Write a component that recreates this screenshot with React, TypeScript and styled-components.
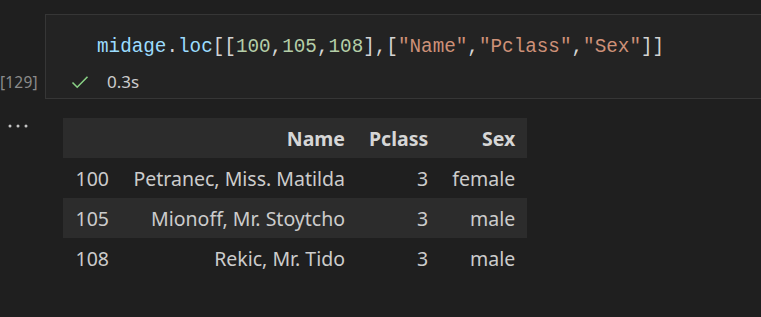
import styled, { createGlobalStyle } from "styled-components";

const GlobalStyle = createGlobalStyle`
    html, body {
        margin: 0;
        padding: 0;
        background: #1f1f1f;
        overflow: hidden;
    }
`;

const Page = styled.div`
    width: 761px;
    height: 317px;
    padding-top: 14px;
    box-sizing: border-box;
    background: #1f1f1f;
    font-family: "Noto Sans", "Open Sans", sans-serif;
`;

const CellRow = styled.div`
    display: flex;
    align-items: flex-end;
`;

const Gutter = styled.div`
    width: 45px;
    flex: none;
    height: 85px;
    display: flex;
    align-items: center;
    padding-top: 51px;
    box-sizing: border-box;
    font-family: "Noto Sans", sans-serif;
    font-size: 15.5px;
    color: #8b8b8b;
    letter-spacing: 0.2px;
`;

const CellBox = styled.div`
    flex: 1;
    height: 85px;
    box-sizing: border-box;
    background: #232323;
    border: 1px solid #363636;
    border-right: none;
    margin-right: -2px;
    display: flex;
    flex-direction: column;
`;

const CodeLine = styled.div`
    height: 44px;
    padding: 20px 0 0 51px;
    box-sizing: border-box;
    font-family: "Liberation Mono", "DejaVu Sans Mono", monospace;
    font-size: 19.3px;
    line-height: 24px;
    white-space: pre;
    color: #d4d4d4;
`;

const Tok = styled.span<{ $kind: "var" | "num" | "str" | "punc" }>`
    color: ${(p) =>
        p.$kind === "var"
            ? "#9cdcfe"
            : p.$kind === "num"
            ? "#b5cea8"
            : p.$kind === "str"
            ? "#ce9178"
            : "#d4d4d4"};
`;

const Status = styled.div`
    display: flex;
    align-items: center;
    gap: 18px;
    padding: 11px 0 0 25px;
    font-size: 17px;
    color: #cccccc;
`;

const Output = styled.div`
    display: flex;
    align-items: flex-start;
    padding-top: 19px;
`;

const MoreButton = styled.div`
    width: 63px;
    flex: none;
    padding: 6px 0 0 8px;
    box-sizing: border-box;
    display: flex;
`;

const Table = styled.table`
    border-collapse: collapse;
    font-family: "Noto Sans", "Open Sans", sans-serif;
    font-size: 19.5px;
    color: #cccccc;
    table-layout: fixed;
`;

const HeadRow = styled.tr`
    background: #2c2c2c;
    height: 40px;
`;

const BodyRow = styled.tr<{ $striped?: boolean }>`
    background: ${(p) => (p.$striped ? "#2c2c2c" : "transparent")};
    height: 40px;
`;

const Th = styled.th<{ $w: number }>`
    width: ${(p) => p.$w}px;
    padding: 0 12px;
    box-sizing: border-box;
    text-align: right;
    font-weight: 700;
    color: #d6d6d6;
`;

const Td = styled.td`
    padding: 0 12px;
    text-align: right;
    white-space: nowrap;
`;

const Check = () => (
    <svg width="18" height="14" viewBox="0 0 18 14">
        <path d="M1.5 7.5 L6.2 12.2 L16.5 1.8" fill="none" stroke="#89d185" strokeWidth="1.6" />
    </svg>
);

const Ellipsis = () => (
    <svg width="20" height="4" viewBox="0 0 20 4">
        <circle cx="2" cy="2" r="1.5" fill="#c5c5c5" />
        <circle cx="10" cy="2" r="1.5" fill="#c5c5c5" />
        <circle cx="18" cy="2" r="1.5" fill="#c5c5c5" />
    </svg>
);

const rows = [
    { idx: 100, name: "Petranec, Miss. Matilda", pclass: 3, sex: "female" },
    { idx: 105, name: "Mionoff, Mr. Stoytcho", pclass: 3, sex: "male" },
    { idx: 108, name: "Rekic, Mr. Tido", pclass: 3, sex: "male" },
];

const App = () => {
    return (
        <Page>
            <GlobalStyle />
            <CellRow>
                <Gutter>[129]</Gutter>
                <CellBox>
                    <CodeLine>
                        <Tok $kind="var">midage</Tok>
                        <Tok $kind="punc">.</Tok>
                        <Tok $kind="var">loc</Tok>
                        <Tok $kind="punc">[[</Tok>
                        <Tok $kind="num">100</Tok>
                        <Tok $kind="punc">,</Tok>
                        <Tok $kind="num">105</Tok>
                        <Tok $kind="punc">,</Tok>
                        <Tok $kind="num">108</Tok>
                        <Tok $kind="punc">],[</Tok>
                        <Tok $kind="str">"Name"</Tok>
                        <Tok $kind="punc">,</Tok>
                        <Tok $kind="str">"Pclass"</Tok>
                        <Tok $kind="punc">,</Tok>
                        <Tok $kind="str">"Sex"</Tok>
                        <Tok $kind="punc">]]</Tok>
                    </CodeLine>
                    <Status>
                        <Check />
                        <span>0.3s</span>
                    </Status>
                </CellBox>
            </CellRow>
            <Output>
                <MoreButton>
                    <Ellipsis />
                </MoreButton>
                <Table>
                    <thead>
                        <HeadRow>
                            <Th $w={58}></Th>
                            <Th $w={236}>Name</Th>
                            <Th $w={83}>Pclass</Th>
                            <Th $w={87}>Sex</Th>
                        </HeadRow>
                    </thead>
                    <tbody>
                        {rows.map((r, i) => (
                            <BodyRow key={r.idx} $striped={i % 2 === 1}>
                                <Td>{r.idx}</Td>
                                <Td>{r.name}</Td>
                                <Td>{r.pclass}</Td>
                                <Td>{r.sex}</Td>
                            </BodyRow>
                        ))}
                    </tbody>
                </Table>
            </Output>
        </Page>
    );
};

export default App;
